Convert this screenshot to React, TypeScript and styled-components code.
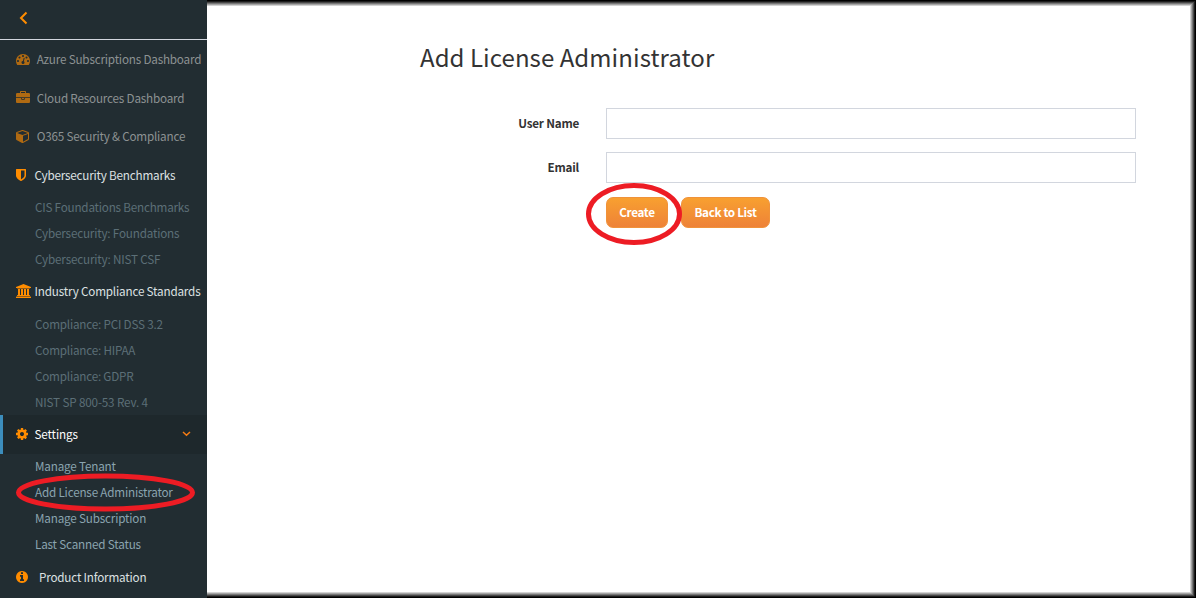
import React from 'react';
import styled, { createGlobalStyle } from 'styled-components';

const Global = createGlobalStyle`
  * { box-sizing: border-box; }
  html, body { margin: 0; padding: 0; overflow: hidden; }
  body { font-family: "Noto Sans CJK SC", "Noto Sans", sans-serif; background: #fff; }
`;

const Page = styled.div`
  position: relative;
  display: flex;
  width: 1196px;
  height: 598px;
`;

const Sidebar = styled.nav`
  width: 207px;
  flex: none;
  background: #222d32;
  overflow: hidden;
`;

const Collapse = styled.div`
  height: 40px;
  padding: 11px 0 0 19px;
  border-bottom: 1px solid #d2d6de;
  svg { display: block; }
`;

const Row = styled.div<{ $tone?: 'dim' | 'active'; $gap: number; $ls: number; $h: number }>`
  display: flex;
  align-items: flex-start;
  height: ${p => p.$h}px;
  padding: 10px 0 0 ${p => (p.$tone === 'active' ? 13 : 16)}px;
  gap: ${p => p.$gap}px;
  font-size: 11.7px;
  line-height: 17px;
  letter-spacing: ${p => p.$ls}px;
  white-space: nowrap;
  color: ${p => (p.$tone === 'dim' ? '#8d9293' : p.$tone === 'active' ? '#fff' : '#dde1e2')};
  background: ${p => (p.$tone === 'active' ? '#1e282c' : 'transparent')};
  border-left: ${p => (p.$tone === 'active' ? '3px solid #3c8dbc' : '0')};
`;

const Glyph = styled.svg<{ $dim: boolean }>`
  flex: none;
  margin-top: 2px;
  fill: ${p => (p.$dim ? '#b06a12' : '#ff8c00')};
`;

const Caret = styled.svg`
  margin: 6px 16px 0 auto;
  fill: none;
  stroke: #f57c14;
  stroke-width: 1.5;
`;

const SubList = styled.div<{ $dim?: boolean; $raised?: boolean }>`
  margin: ${p => (p.$raised ? '-1px 0 1px' : '0')};
  color: ${p => (p.$dim ? '#5c6f77' : '#8aa4af')};
`;

const SubItem = styled.div<{ $ls: number }>`
  height: 26px;
  line-height: 26px;
  padding-left: 35px;
  font-size: 11.7px;
  letter-spacing: ${p => p.$ls}px;
  white-space: nowrap;
`;

const Main = styled.main`
  flex: 1;
  padding: 39px 60px 0 213px;
  color: #333;
  box-shadow: inset -1px 0 #000, inset 0 1px #000, inset 0 -1px #000,
    inset -2px 0 #1c1c1c, inset 0 2px #1c1c1c, inset 0 -2px #1c1c1c,
    inset -3px 0 #484848, inset 0 3px #484848, inset 0 -3px #484848,
    inset -4px 0 #777, inset 0 4px #777, inset 0 -4px #777,
    inset -5px 0 #a4a4a4, inset 0 5px #a4a4a4, inset 0 -5px #a4a4a4,
    inset -6px 0 #d2d2d2, inset 0 6px #d2d2d2, inset 0 -6px #d2d2d2;
`;

const Title = styled.h2`
  margin: 0;
  height: 69px;
  line-height: 36px;
  font-size: 24px;
  font-weight: 400;
  letter-spacing: 0.07px;
`;

const Field = styled.div`
  display: flex;
  height: 31px;
  margin-bottom: 13px;
`;

const Label = styled.label`
  width: 159px;
  height: 29px;
  margin-right: 27px;
  line-height: 29px;
  text-align: right;
  font-size: 11.7px;
  font-weight: 700;
  letter-spacing: -0.22px;
`;

const Input = styled.input`
  flex: 1;
  height: 31px;
  border: 1px solid #d2d6de;
  background: #fff;
  outline: none;
`;

const Actions = styled.div`
  display: flex;
  gap: 13px;
  padding: 1px 0 0 186px;
`;

const Button = styled.button<{ $w: number }>`
  width: ${p => p.$w}px;
  height: 31px;
  padding: 0 0 2px;
  border: 1px solid #f0923a;
  border-radius: 7px;
  background: linear-gradient(#f8a030, #ee8238);
  color: #fff;
  font: 700 11.7px/27px "Noto Sans CJK SC", sans-serif;
  letter-spacing: -0.34px;
  white-space: nowrap;
`;

const Marker = styled.svg<{ $x: number; $y: number }>`
  position: absolute;
  left: ${p => p.$x}px;
  top: ${p => p.$y}px;
  fill: none;
  stroke: #ed1c24;
  stroke-width: 5;
`;

const icons = {
  dashboard: 'M384 1152q0-53-37.5-90.5t-90.5-37.5-90.5 37.5-37.5 90.5 37.5 90.5 90.5 37.5 90.5-37.5 37.5-90.5zm192-448q0-53-37.5-90.5t-90.5-37.5-90.5 37.5-37.5 90.5 37.5 90.5 90.5 37.5 90.5-37.5 37.5-90.5zm428 481l101-382q6-26-7.5-48.5t-38.5-29.5-48 6.5-30 39.5l-101 382q-60 5-107 43.5t-63 98.5q-20 77 20 146t117 89 146-20 89-117q16-60-6-117t-72-91zm660-33q0-53-37.5-90.5t-90.5-37.5-90.5 37.5-37.5 90.5 37.5 90.5 90.5 37.5 90.5-37.5 37.5-90.5zm-640-640q0-53-37.5-90.5t-90.5-37.5-90.5 37.5-37.5 90.5 37.5 90.5 90.5 37.5 90.5-37.5 37.5-90.5zm448 192q0-53-37.5-90.5t-90.5-37.5-90.5 37.5-37.5 90.5 37.5 90.5 90.5 37.5 90.5-37.5 37.5-90.5zm320 448q0 261-141 483-19 29-54 29h-1402q-35 0-54-29-141-221-141-483 0-182 71-348t191-286 286-191 348-71 348 71 286 191 191 286 71 348z',
  briefcase: 'M640 256h512v-128h-512v128zm1152 640v480q0 66-47 113t-113 47h-1472q-66 0-113-47t-47-113v-480h672v160q0 26 19 45t45 19h320q26 0 45-19t19-45v-160h672zm-768 0v128h-256v-128h256zm768-480v384h-1792v-384q0-66 47-113t113-47h352v-160q0-40 28-68t68-28h576q40 0 68 28t28 68v160h352q66 0 113 47t47 113z',
  cube: 'M896 1629l640-349v-636l-640 233v752zm-64-865l698-254-698-254-698 254zm832-252v768q0 35-18 65t-49 47l-704 384q-28 16-61 16t-61-16l-704-384q-31-17-49-47t-18-65v-768q0-40 23-73t61-47l704-256q22-8 44-8t44 8l704 256q38 14 61 47t23 73z',
  shield: 'M1088 960v-640h-448v1137q119-63 213-137 235-184 235-360zm192-768v768q0 86-33.5 170.5t-83 150-118 127.5-126.5 103-121 77.5-89.5 49.5-42.5 20q-12 6-26 6t-26-6q-16-7-42.5-20t-89.5-49.5-121-77.5-126.5-103-118-127.5-83-150-33.5-170.5v-768q0-26 19-45t45-19h1152q26 0 45 19t19 45z',
  bank: 'M960 0l960 384v128h-128q0 26-20.5 45t-48.5 19h-1526q-28 0-48.5-19t-20.5-45h-128v-128zm-704 640h256v768h128v-768h256v768h128v-768h256v768h128v-768h256v768h59q28 0 48.5 19t20.5 45v64h-1664v-64q0-26 20.5-45t48.5-19h59v-768zm1595 960q28 0 48.5 19t20.5 45v128h-1920v-128q0-26 20.5-45t48.5-19h1782z',
  cog: 'M1024 896q0-106-75-181t-181-75-181 75-75 181 75 181 181 75 181-75 75-181zm512-109v222q0 12-8 23t-20 13l-185 28q-19 54-39 91 35 50 107 138 10 12 10 25t-9 23q-27 37-99 108t-94 71q-12 0-26-9l-138-108q-44 23-91 38-16 136-29 186-7 28-36 28h-222q-14 0-24.5-8.5t-11.5-21.5l-28-184q-49-16-90-37l-141 107q-10 9-25 9-14 0-25-11-126-114-165-168-7-10-7-23 0-12 8-23 15-21 51-66.5t54-70.5q-27-50-41-99l-183-27q-13-2-21-12.5t-8-23.5v-222q0-12 8-23t19-13l186-28q14-46 39-92-40-57-107-138-10-12-10-24 0-10 9-23 26-36 98.5-107.5t94.5-71.5q13 0 26 10l138 107q44-23 91-38 16-136 29-186 7-28 36-28h222q14 0 24.5 8.5t11.5 21.5l28 184q49 16 90 37l142-107q9-9 24-9 13 0 25 10 129 119 165 170 7 8 7 22 0 12-8 23-15 21-51 66.5t-54 70.5q26 50 41 98l183 28q13 2 21 12.5t8 23.5z',
  info: 'M1024 1376v-160q0-14-9-23t-23-9h-96v-512q0-14-9-23t-23-9h-320q-14 0-23 9t-9 23v160q0 14 9 23t23 9h96v320h-96q-14 0-23 9t-9 23v160q0 14 9 23t23 9h448q14 0 23-9t9-23zm-128-896v-160q0-14-9-23t-23-9h-192q-14 0-23 9t-9 23v160q0 14 9 23t23 9h192q14 0 23-9t9-23zm640 416q0 209-103 385.5t-279.5 279.5-385.5 103-385.5-103-279.5-279.5-103-385.5 103-385.5 279.5-279.5 385.5-103 385.5 103 279.5 279.5 103 385.5z',
};

// Glyph widths in the icon font's own units; the em height is 1792 units = 14px.
const widths = { dashboard: 1792, briefcase: 1792, cube: 1664, shield: 1280, bank: 1920, cog: 1536, info: 1536 };

const Icon = ({ name, dim }: { name: keyof typeof icons; dim: boolean }) => (
  <Glyph $dim={dim} width={widths[name] / 128} height={14} viewBox={`0 0 ${widths[name]} 1792`}>
    <path d={icons[name]} />
  </Glyph>
);

type RowProps = {
  icon: keyof typeof icons;
  label: string;
  tone?: 'dim' | 'active';
  gap: number;
  h?: number;
  ls?: number;
  open?: boolean;
};

const NavRow = ({ icon, label, tone, gap, h = 39, ls = -0.19, open }: RowProps) => (
  <Row $tone={tone} $gap={gap} $ls={ls} $h={h}>
    <Icon name={icon} dim={tone === 'dim'} />
    <span>{label}</span>
    {open && (
      <Caret width="9" height="6" viewBox="0 0 9 6">
        <path d="M1 1l3.5 3.3L8 1" />
      </Caret>
    )}
  </Row>
);

const Subs = ({ items, dim, raised }: { items: [string, number][]; dim?: boolean; raised?: boolean }) => (
  <SubList $dim={dim} $raised={raised}>
    {items.map(([text, ls]) => (
      <SubItem key={text} $ls={ls}>{text}</SubItem>
    ))}
  </SubList>
);

export default function App() {
  return (
    <>
      <Global />
      <Page>
        <Sidebar>
          <Collapse>
            <svg width="9" height="14" viewBox="0 0 9 14" fill="none" stroke="#ff8c00" strokeWidth="2">
              <path d="M7.5 1.5L2 7l5.500 5.500" />
            </svg>
          </Collapse>
          <NavRow icon="dashboard" label="Azure Subscriptions Dashboard" tone="dim" gap={6.7} />
          <NavRow icon="briefcase" label="Cloud Resources Dashboard" tone="dim" gap={6.7} h={38} />
          <NavRow icon="cube" label="O365 Security & Compliance" tone="dim" gap={7.7} ls={-0.2} />
          <NavRow icon="shield" label="Cybersecurity Benchmarks" gap={8.5} h={38} ls={-0.2} />
          <Subs dim items={[['CIS Foundations Benchmarks', -0.21], ['Cybersecurity: Foundations', -0.19], ['Cybersecurity: NIST CSF', -0.18]]} />
          <NavRow icon="bank" label="Industry Compliance Standards" gap={3.5} ls={-0.18} />
          <Subs dim items={[['Compliance: PCI DSS 3.2', -0.2], ['Compliance: HIPAA', -0.2], ['Compliance: GDPR', -0.21], ['NIST SP 800-53 Rev. 4', -0.16]]} />
          <NavRow icon="cog" label="Settings" tone="active" gap={6.5} ls={-0.12} open />
          <Subs raised items={[['Manage Tenant', -0.19], ['Add License Administrator', -0.19], ['Manage Subscription', -0.18], ['Last Scanned Status', -0.18]]} />
          <NavRow icon="info" label="Product Information" gap={11} />
        </Sidebar>
        <Main>
          <Title>Add License Administrator</Title>
          <Field>
            <Label htmlFor="user">User Name</Label>
            <Input id="user" />
          </Field>
          <Field>
            <Label htmlFor="email">Email</Label>
            <Input id="email" />
          </Field>
          <Actions>
            <Button $w={62}>Create</Button>
            <Button $w={89}>Back to List</Button>
          </Actions>
        </Main>
        <Marker $x={15} $y={473} width="181" height="39">
          <ellipse cx="90.500" cy="19.500" rx="87" ry="16.500" />
        </Marker>
        <Marker $x={585} $y={182} width="98" height="64">
          <ellipse cx="49" cy="32" rx="45.500" ry="28.500" />
        </Marker>
      </Page>
    </>
  );
}
